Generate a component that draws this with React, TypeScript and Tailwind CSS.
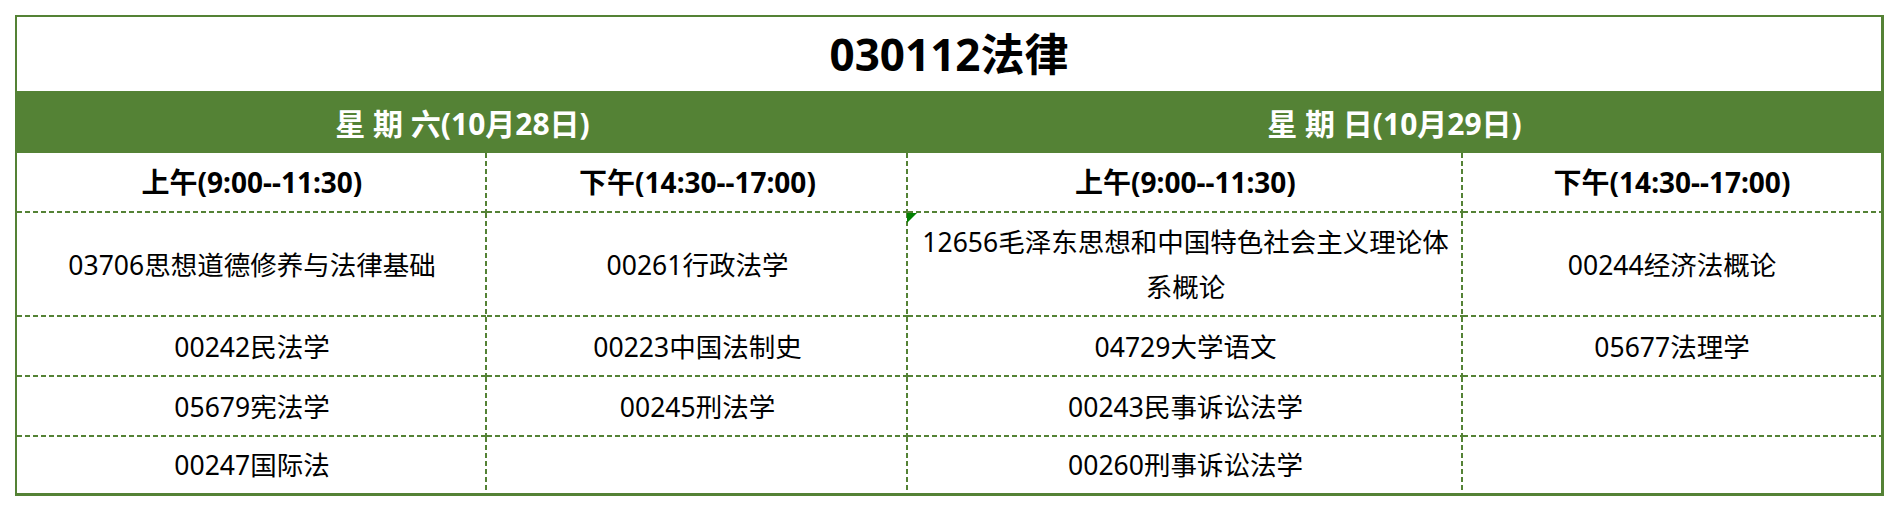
import React from "react";

// dashed cell edges, drawn as gradients so dash/gap match the sheet
const dashRB =
  "[background-image:repeating-linear-gradient(90deg,#548235_0_5px,transparent_5px_8px),repeating-linear-gradient(180deg,#548235_0_5px,transparent_5px_8px)] [background-size:100%_2px,2px_100%] [background-position:left_bottom,right_top] [background-repeat:no-repeat]";
const dashR =
  "[background-image:repeating-linear-gradient(180deg,#548235_0_5px,transparent_5px_8px)] [background-size:2px_100%] [background-position:right_top] [background-repeat:no-repeat]";
const dashB =
  "[background-image:repeating-linear-gradient(90deg,#548235_0_5px,transparent_5px_8px)] [background-size:100%_2px] [background-position:left_bottom] [background-repeat:no-repeat]";

const headers = ["上午(9:00--11:30)", "下午(14:30--17:00)", "上午(9:00--11:30)", "下午(14:30--17:00)"];

const rows: { h: string; cells: (string | string[])[] }[] = [
  {
    h: "h-[104px]",
    cells: [
      "03706思想道德修养与法律基础",
      "00261行政法学",
      ["12656毛泽东思想和中国特色社会主义理论体", "系概论"],
      "00244经济法概论",
    ],
  },
  { h: "h-[60px]", cells: ["00242民法学", "00223中国法制史", "04729大学语文", "05677法理学"] },
  { h: "h-[60px]", cells: ["05679宪法学", "00245刑法学", "00243民事诉讼法学", ""] },
  { h: "h-[56px]", cells: ["00247国际法", "", "00260刑事诉讼法学", ""] },
];

export default function App() {
  return (
    <div className="w-[1900px] h-[512px] bg-white pt-[15px] pl-[15px] font-['Noto_Sans','Noto_Sans_CJK_SC',sans-serif] text-black">
      <div className="w-[1869px] border-t-2 border-l-2 border-r-[3px] border-b-[3px] border-[#548235]">
        {/* title */}
        <div className="h-[74px] flex items-center justify-center text-[44px] font-bold leading-none">
          030112法律
        </div>

        {/* day band */}
        <div className="grid grid-cols-[891px_973px] h-[62px] bg-[#548235] text-white text-[30px] font-bold leading-none">
          <div className="flex items-center justify-center pt-[3px]">星 期 六(10月28日)</div>
          <div className="flex items-center justify-center pt-[3px]">星 期 日(10月29日)</div>
        </div>

        {/* table body */}
        <div className="grid grid-cols-[470px_421px_555px_418px]">
          {headers.map((t, i) => (
            <div
              key={"h" + i}
              className={`h-[60px] flex items-center justify-center pb-[2px] text-[28px] font-bold ${i < 3 ? dashRB : dashB}`}
            >
              {t}
            </div>
          ))}

          {rows.map((row, r) =>
            row.cells.map((c, i) => {
              const last = r === rows.length - 1;
              const edge = last ? (i < 3 ? dashR : "") : i < 3 ? dashRB : dashB;
              return (
                <div
                  key={r + "-" + i}
                  className={`relative ${row.h} flex flex-col items-center justify-center text-center text-[26.5px] ${edge}`}
                >
                  {Array.isArray(c) ? (
                    <>
                      <span className="leading-[45px]">{c[0]}</span>
                      <span className="leading-[45px]">{c[1]}</span>
                      {/* sheet's note marker */}
                      <span className="absolute left-[-1px] top-0 w-[10px] h-[10px] bg-[#008000] [clip-path:polygon(0_0,100%_0,0_100%)]" />
                    </>
                  ) : (
                    <span className="leading-none">{c}</span>
                  )}
                </div>
              );
            })
          )}
        </div>
      </div>
    </div>
  );
}
